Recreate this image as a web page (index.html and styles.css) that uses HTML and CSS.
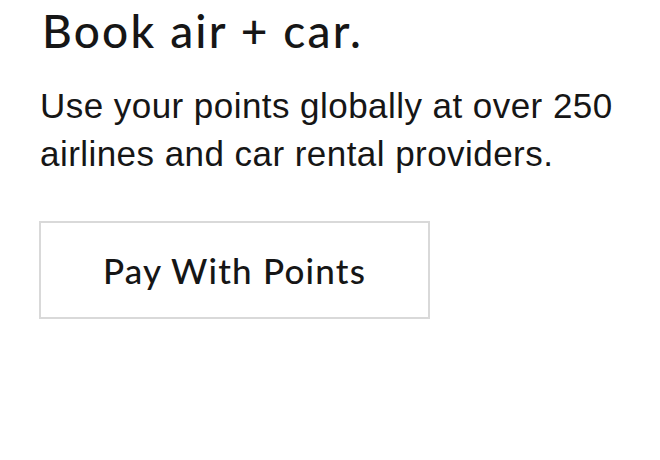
FILE: index.html
```html
<!DOCTYPE html>
<html lang="en">
<head>
<meta charset="utf-8">
<title>Book air + car</title>
<link rel="stylesheet" href="styles.css">
</head>
<body>
<section class="promo">
  <h1 class="promo-title">Book air + car.</h1>
  <p class="promo-text">Use your points globally at over 250 airlines and car rental providers.</p>
  <button class="promo-btn" type="button">Pay With Points</button>
</section>
</body>
</html>
```

FILE: styles.css
```css
html, body {
  margin: 0;
  padding: 0;
  background: #ffffff;
}

.promo {
  display: flex;
  flex-direction: column;
  align-items: flex-start;
  padding: 3px 40px 0 40px;
  color: #161616;
}

.promo-title {
  margin: 0 0 0 2px;
  font-family: "Lato", "Noto Sans", sans-serif;
  font-weight: 500;
  font-size: 46px;
  line-height: 56px;
  letter-spacing: 2.2px;
}

.promo-text {
  margin: 23px 0 0 0;
  width: 600px;
  font-family: "Liberation Sans", Arial, sans-serif;
  font-size: 35px;
  line-height: 48.4px;
  letter-spacing: 0.45px;
}

.promo-btn {
  margin-top: 42px;
  margin-left: -1px;
  width: 391px;
  height: 98px;
  box-sizing: border-box;
  border: 2px solid #d9d9d9;
  background: #ffffff;
  color: #161616;
  font-family: "Lato", "Noto Sans", sans-serif;
  font-size: 35px;
  font-weight: 500;
  letter-spacing: 1.2px;
  padding: 0;
  cursor: pointer;
}
```
